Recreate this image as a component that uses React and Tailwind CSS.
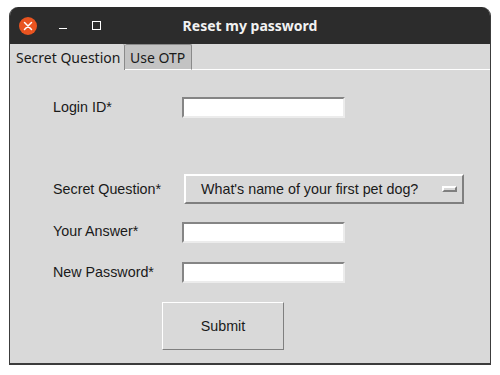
import React from "react";

const label = "w-[129px] shrink-0 text-[14.3px] text-[#1a1a1a]";
const entry =
  "h-[21px] w-[163px] bg-white border-2 border-t-[#858585] border-l-[#858585] border-b-[#ececec] border-r-[#ececec]";

const Row = ({ text, children, className = "" }) => (
  <div className={`flex items-center pl-[43px] ${className}`}>
    <span className={label}>{text}</span>
    {children}
  </div>
);

export default function App() {
  return (
    <div
      className="w-[500px] h-[375px] bg-white pt-[7px] pl-[9px]"
      style={{ fontFamily: '"Liberation Sans", Arial, sans-serif' }}
    >
      <div className="w-[482px] h-[358px] flex flex-col rounded-t-[9px] overflow-hidden bg-[#d9d9d9] border-x border-b-2 border-[#3c3c3c]">
        {/* title bar */}
        <div
          className="h-[37px] shrink-0 bg-[#2c2c2c] flex items-center relative"
          style={{ fontFamily: '"Noto Sans", "Open Sans", sans-serif' }}
        >
          <div className="ml-[9px] w-[18px] h-[18px] rounded-full bg-[#e95420] flex items-center justify-center">
            <svg width="10" height="10" viewBox="0 0 10 10">
              <path d="M1.5 1.5L8.5 8.5M8.5 1.5L1.5 8.5" stroke="#fff" strokeWidth="1.5" strokeLinecap="round" />
            </svg>
          </div>
          <div className="ml-[22px] mt-[6px] w-[8px] h-[1.5px] bg-white" />
          <div className="ml-[25px] w-[9px] h-[9px] border border-white" />
          <div className="absolute inset-0 flex items-center justify-center text-[14px] font-bold text-[#f2f2f2]">
            Reset my password
          </div>
        </div>
        {/* tabs */}
        <div
          className="h-[26px] shrink-0 flex items-stretch"
          style={{ fontFamily: '"Noto Sans", "Open Sans", sans-serif' }}
        >
          <div className="w-[115px] flex items-center pl-[6px] pt-[1px] text-[14px] text-[#1a1a1a] bg-[#d9d9d9] border-r border-[#8a8a8a] rounded-tr-[2px]">
            Secret Question
          </div>
          <div className="w-[67px] flex items-center pl-[5px] text-[14px] text-[#1a1a1a] bg-[#c3c3c3] border-r border-t border-[#8a8a8a] border-b border-b-white rounded-t-[2px]">
            Use OTP
          </div>
          <div className="flex-1 border-b border-white" />
        </div>
        {/* body */}
        <div className="flex-1 flex flex-col">
          <Row text="Login ID*" className="mt-[27px]">
            <div className={entry} />
          </Row>
          <Row text="Secret Question*" className="mt-[56px]">
            <div className="ml-[2px] h-[30px] w-[280px] flex items-center border-2 border-t-white border-l-white border-b-[#7f7f7f] border-r-[#7f7f7f]">
              <span className="ml-[15px] text-[14.3px] text-[#1a1a1a]">What's name of your first pet dog?</span>
              <div className="ml-auto mr-[5px] w-[15px] h-[6px] bg-[#d9d9d9] border-2 border-t-white border-l-white border-b-[#7f7f7f] border-r-[#7f7f7f]" />
            </div>
          </Row>
          <Row text="Your Answer*" className="mt-[17px]">
            <div className={entry} />
          </Row>
          <Row text="New Password*" className="mt-[19px]">
            <div className={entry} />
          </Row>
          <div className="mt-[19px] ml-[152px] w-[122px] h-[48px] flex items-center justify-center text-[14.3px] text-[#1a1a1a] border border-t-white border-l-white border-b-[#7f7f7f] border-r-[#7f7f7f]">
            Submit
          </div>
        </div>
      </div>
    </div>
  );
}
